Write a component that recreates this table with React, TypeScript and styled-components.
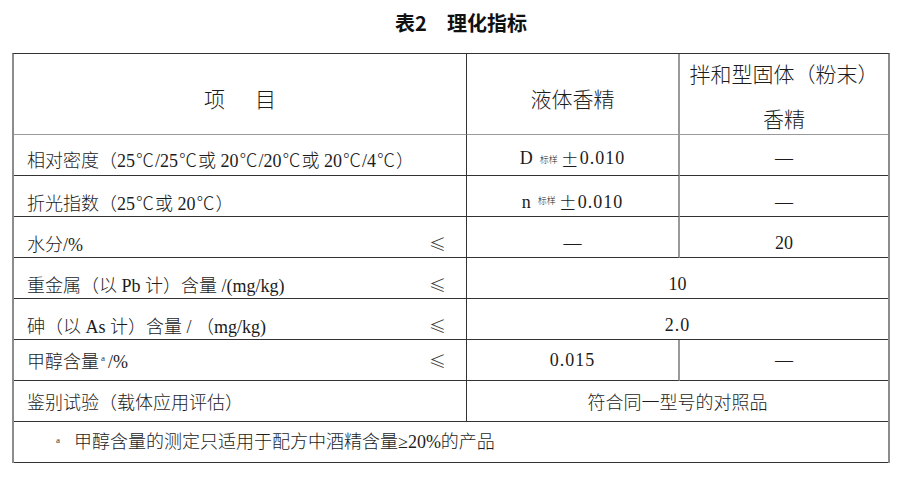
import React from "react";
import styled, { createGlobalStyle } from "styled-components";

const Global = createGlobalStyle`
  html, body { margin: 0; padding: 0; background: #ffffff; }
  body { width: 907px; height: 479px; overflow: hidden; }
`;

const Page = styled.div`
  padding: 10px 17px 0 12px;
  font-family: "Liberation Serif", "Noto Sans CJK SC", serif;
  color: #1c1c1c;
`;

const Title = styled.h1`
  margin: 0 0 17px;
  padding-left: 20px;
  height: 26px;
  line-height: 26px;
  text-align: center;
  font-family: "Noto Sans CJK SC", sans-serif;
  font-weight: 700;
  font-size: 20px;
  color: #111;
`;

const Table = styled.div`
  display: grid;
  grid-template-columns: 453px 213px 208px;
  grid-template-rows: 81px repeat(8, 41px);
  width: 878px;
  box-sizing: border-box;
  border-top: 1px solid #333;
  border-left: 2px solid #8c8c8c;
  border-right: 2px solid #8c8c8c;
  font-size: 18px;
`;

type Line = "dark" | "gray" | "none";
const lineCss = (l: Line | undefined, w: number) =>
  l === "none" ? "none" : l === "gray" ? `${w}px solid #9a9a9a` : `1px solid #333`;

const Cell = styled.div<{ $span?: number; $right?: Line; $bottom?: Line; $pad?: number }>`
  grid-column: span ${(p) => p.$span ?? 1};
  box-sizing: border-box;
  display: flex;
  align-items: center;
  justify-content: center;
  padding-top: ${(p) => p.$pad ?? 0}px;
  border-right: ${(p) => lineCss(p.$right, 2)};
  border-bottom: ${(p) => lineCss(p.$bottom ?? "dark", 1)};
  white-space: nowrap;
  font-weight: 300;
`;

const HeadCell = styled(Cell)`
  font-size: 21px;
  line-height: 45px;
  text-align: center;
`;

const LabelCell = styled(Cell)`
  justify-content: space-between;
  padding-left: 13px;
  padding-right: 20px;
`;

const FootCell = styled(Cell)`
  justify-content: flex-start;
  padding-left: 40px;
  padding-bottom: 4px;
`;

const Spaced = styled.span`
  display: inline-flex;
  gap: 30px;
`;

const Le = styled.span`
  font-family: "Noto Sans CJK SC", sans-serif;
  font-size: 17px;
  color: #333;
`;

const Wide = styled.span`
  font-family: "Noto Sans CJK SC", sans-serif;
  font-weight: 300;
  padding: 0 1px;
`;

const Sub = styled.span`
  font-family: "Noto Sans CJK SC", sans-serif;
  font-size: 9px;
  margin: 4px 2px 0 7px;
  align-self: flex-end;
  padding-bottom: 9px;
`;

const Sup = styled.sup<{ $gap?: number }>`
  font-size: 9px;
  vertical-align: 7px;
  margin: 0 ${(p) => p.$gap ?? 3}px 0 2px;
  color: #333;
`;

const Num = styled.span`
  letter-spacing: 1px;
`;

const wide = (text: string) =>
  text.split(/([℃±])/).map((part, i) =>
    /^[℃±]$/.test(part) ? <Wide key={i}>{part}</Wide> : <React.Fragment key={i}>{part}</React.Fragment>
  );

type Row = {
  label: React.ReactNode;
  le?: boolean;
  values: React.ReactNode[];
  pad: number;
};

const rows: Row[] = [
  {
    label: wide("相对密度（25℃/25℃或 20℃/20℃或 20℃/4℃）"),
    values: [
      <>D<Sub>标样</Sub><Wide>±</Wide><Num>0.010</Num></>,
      "—",
    ],
    pad: 7,
  },
  {
    label: wide("折光指数（25℃或 20℃）"),
    values: [
      <>n<Sub>标样</Sub><Wide>±</Wide><Num>0.010</Num></>,
      "—",
    ],
    pad: 12,
  },
  { label: "水分/%", le: true, values: ["—", "20"], pad: 12 },
  { label: "重金属（以 Pb 计）含量 /(mg/kg)", le: true, values: ["10"], pad: 12 },
  { label: "砷（以 As 计）含量 / （mg/kg)", le: true, values: [<Num>2.0</Num>], pad: 12 },
  {
    label: <>甲醇含量<Sup>a</Sup>/%</>,
    le: true,
    values: [<Num>0.015</Num>, "—"],
    pad: 0,
  },
  { label: "鉴别试验（载体应用评估）", values: ["符合同一型号的对照品"], pad: 0 },
];

export default function App() {
  return (
    <>
      <Global />
      <Page>
        <Title>表2　理化指标</Title>
        <Table>
          <HeadCell $right="dark" $bottom="gray" $pad={12}>
            <Spaced>
              <span>项</span>
              <span>目</span>
            </Spaced>
          </HeadCell>
          <HeadCell $right="gray" $bottom="gray" $pad={12}>
            液体香精
          </HeadCell>
          <HeadCell $right="none" $bottom="gray" $pad={7}>
            <span>
              拌和型固体（粉末）
              <br />
              香精
            </span>
          </HeadCell>
          {rows.map((r, i) => (
            <React.Fragment key={i}>
              <LabelCell $right="dark" $pad={r.pad}>
                <span>{r.label}</span>
                {r.le && <Le>≤</Le>}
              </LabelCell>
              {r.values.length === 2 ? (
                <>
                  <Cell $right="gray" $pad={r.pad}>{r.values[0]}</Cell>
                  <Cell $right="none" $pad={r.pad}>{r.values[1]}</Cell>
                </>
              ) : (
                <Cell $span={2} $right="none" $pad={r.pad}>{r.values[0]}</Cell>
              )}
            </React.Fragment>
          ))}
          <FootCell $span={3} $right="none">
            <Sup $gap={14}>a</Sup>
            <span>甲醇含量的测定只适用于配方中酒精含量≥20%的产品</span>
          </FootCell>
        </Table>
      </Page>
    </>
  );
}
